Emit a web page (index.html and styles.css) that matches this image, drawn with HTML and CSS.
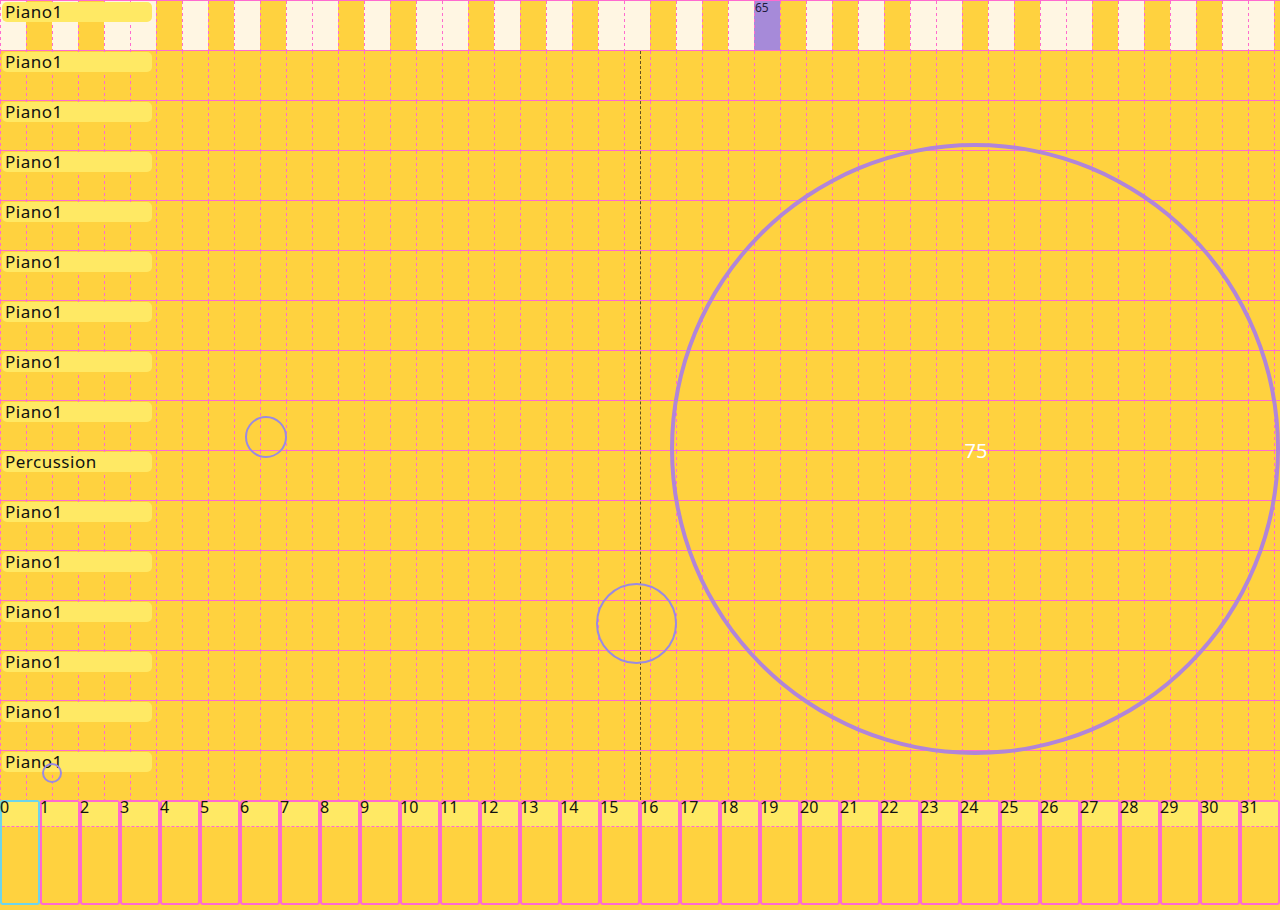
FILE: index.html
```html
<!DOCTYPE html>
<html>
<head>
<meta charset="utf-8">
<link rel="stylesheet" href="styles.css">
</head>
<body>
<div class="roll">
  <div class="row keys-row">
    <div class="label">Piano1</div>
    <div class="key w"></div><div class="key"></div><div class="key w"></div><div class="key"></div><div class="key w"></div><div class="key w"></div><div class="key"></div><div class="key w"></div><div class="key"></div><div class="key w"></div><div class="key"></div><div class="key w"></div>
    <div class="key w"></div><div class="key"></div><div class="key w"></div><div class="key"></div><div class="key w"></div><div class="key w"></div><div class="key"></div><div class="key w"></div><div class="key"></div><div class="key w"></div><div class="key"></div><div class="key w"></div>
    <div class="key w"></div><div class="key"></div><div class="key w"></div><div class="key"></div><div class="key w"></div><div class="key on">65</div><div class="key"></div><div class="key w"></div><div class="key"></div><div class="key w"></div><div class="key"></div><div class="key w"></div>
    <div class="key w"></div><div class="key"></div><div class="key w"></div><div class="key"></div><div class="key w"></div><div class="key w"></div><div class="key"></div><div class="key w"></div><div class="key"></div><div class="key w"></div><div class="key"></div><div class="key w"></div>
    <div class="key w"></div><div class="key"></div>
  </div>
  <div class="row"><div class="label">Piano1</div></div>
  <div class="row"><div class="label">Piano1</div></div>
  <div class="row"><div class="label">Piano1</div></div>
  <div class="row"><div class="label">Piano1</div></div>
  <div class="row"><div class="label">Piano1</div></div>
  <div class="row"><div class="label">Piano1</div></div>
  <div class="row"><div class="label">Piano1</div></div>
  <div class="row"><div class="label">Piano1</div></div>
  <div class="row"><div class="label">Percussion</div></div>
  <div class="row"><div class="label">Piano1</div></div>
  <div class="row"><div class="label">Piano1</div></div>
  <div class="row"><div class="label">Piano1</div></div>
  <div class="row"><div class="label">Piano1</div></div>
  <div class="row"><div class="label">Piano1</div></div>
  <div class="row"><div class="label">Piano1</div></div>

  <div class="dot dot-a"></div>
  <div class="dot dot-b"></div>
  <div class="dot dot-c"></div>
  <div class="dot dot-big">75</div>
</div>
<div class="bars">
  <div class="bar sel"><div class="bar-head"></div><span class="num">0</span></div>
  <div class="bar"><div class="bar-head"></div><span class="num">1</span></div>
  <div class="bar"><div class="bar-head"></div><span class="num">2</span></div>
  <div class="bar"><div class="bar-head"></div><span class="num">3</span></div>
  <div class="bar"><div class="bar-head"></div><span class="num">4</span></div>
  <div class="bar"><div class="bar-head"></div><span class="num">5</span></div>
  <div class="bar"><div class="bar-head"></div><span class="num">6</span></div>
  <div class="bar"><div class="bar-head"></div><span class="num">7</span></div>
  <div class="bar"><div class="bar-head"></div><span class="num">8</span></div>
  <div class="bar"><div class="bar-head"></div><span class="num">9</span></div>
  <div class="bar"><div class="bar-head"></div><span class="num">10</span></div>
  <div class="bar"><div class="bar-head"></div><span class="num">11</span></div>
  <div class="bar"><div class="bar-head"></div><span class="num">12</span></div>
  <div class="bar"><div class="bar-head"></div><span class="num">13</span></div>
  <div class="bar"><div class="bar-head"></div><span class="num">14</span></div>
  <div class="bar"><div class="bar-head"></div><span class="num">15</span></div>
  <div class="bar"><div class="bar-head"></div><span class="num">16</span></div>
  <div class="bar"><div class="bar-head"></div><span class="num">17</span></div>
  <div class="bar"><div class="bar-head"></div><span class="num">18</span></div>
  <div class="bar"><div class="bar-head"></div><span class="num">19</span></div>
  <div class="bar"><div class="bar-head"></div><span class="num">20</span></div>
  <div class="bar"><div class="bar-head"></div><span class="num">21</span></div>
  <div class="bar"><div class="bar-head"></div><span class="num">22</span></div>
  <div class="bar"><div class="bar-head"></div><span class="num">23</span></div>
  <div class="bar"><div class="bar-head"></div><span class="num">24</span></div>
  <div class="bar"><div class="bar-head"></div><span class="num">25</span></div>
  <div class="bar"><div class="bar-head"></div><span class="num">26</span></div>
  <div class="bar"><div class="bar-head"></div><span class="num">27</span></div>
  <div class="bar"><div class="bar-head"></div><span class="num">28</span></div>
  <div class="bar"><div class="bar-head"></div><span class="num">29</span></div>
  <div class="bar"><div class="bar-head"></div><span class="num">30</span></div>
  <div class="bar"><div class="bar-head"></div><span class="num">31</span></div>
</div>
</body>
</html>
```
FILE: styles.css
```css
* { box-sizing: border-box; }

body {
  margin: 0;
  width: 1280px;
  height: 910px;
  overflow: hidden;
  background: #ffd23f;
  font-family: "Noto Sans", sans-serif;
  color: #111;
}

.roll {
  position: relative;
  height: 800px;
}

.roll::after {
  content: "";
  position: absolute;
  left: 640px;
  top: 51px;
  bottom: 0;
  border-left: 1px dashed rgba(50, 35, 20, 0.75);
  z-index: 2;
}

.row {
  position: relative;
  height: 50px;
  border-top: 1px solid #ff6ad0;
  padding: 1px 0 0 2px;
}

.row::before {
  content: "";
  position: absolute;
  inset: 0;
  background: repeating-linear-gradient(to right, #ff6ad0 0 1px, transparent 1px 26px);
  -webkit-mask-image: repeating-linear-gradient(to bottom, #000 0 3px, transparent 3px 6px);
  mask-image: repeating-linear-gradient(to bottom, #000 0 3px, transparent 3px 6px);
  pointer-events: none;
  z-index: 1;
}

.label {
  position: relative;
  z-index: 2;
  width: 150px;
  height: 20px;
  padding-left: 3px;
  background: #ffe964;
  border-radius: 5px;
  font-size: 17px;
  letter-spacing: 0.5px;
  line-height: 20px;
  white-space: nowrap;
}

.keys-row {
  display: flex;
  padding: 0;
  overflow: hidden;
}

.keys-row .label {
  position: absolute;
  top: 1px;
  left: 2px;
}

.key {
  flex: 0 0 26px;
  height: 49px;
}

.key.w {
  background: #fff6e3;
}

.key.on {
  background: #a68ad9;
  color: #1e1b3d;
  font-size: 12px;
  line-height: 13px;
  padding-left: 1px;
}

.dot {
  position: absolute;
  border-radius: 50%;
  border: 2px solid #9a8ae2;
  z-index: 3;
}

.dot-a { left: 245px; top: 416px; width: 42px; height: 42px; }
.dot-b { left: 596px; top: 583px; width: 81px; height: 81px; }
.dot-c { left: 42px; top: 763px; width: 20px; height: 20px; }

.dot-big {
  left: 670px;
  top: 143px;
  width: 610px;
  height: 612px;
  border: 4px solid #b185d9;
  display: flex;
  align-items: center;
  justify-content: center;
  color: #fff;
  font-size: 20px;
  padding-top: 3px;
  padding-left: 2px;
}

.bars {
  display: flex;
  height: 110px;
}

.bar {
  position: relative;
  flex: 0 0 40px;
  height: 105px;
  border: 2px solid #ff6ad0;
  border-radius: 3px;
}

.bar.sel {
  border-color: #6dd5ec;
}

.bar-head {
  height: 25px;
  background: #ffe964;
  border-bottom: 1px dashed #ff6ad0;
}

.num {
  position: absolute;
  top: -5px;
  left: -2px;
  font-size: 16px;
  line-height: 20px;
}
```
